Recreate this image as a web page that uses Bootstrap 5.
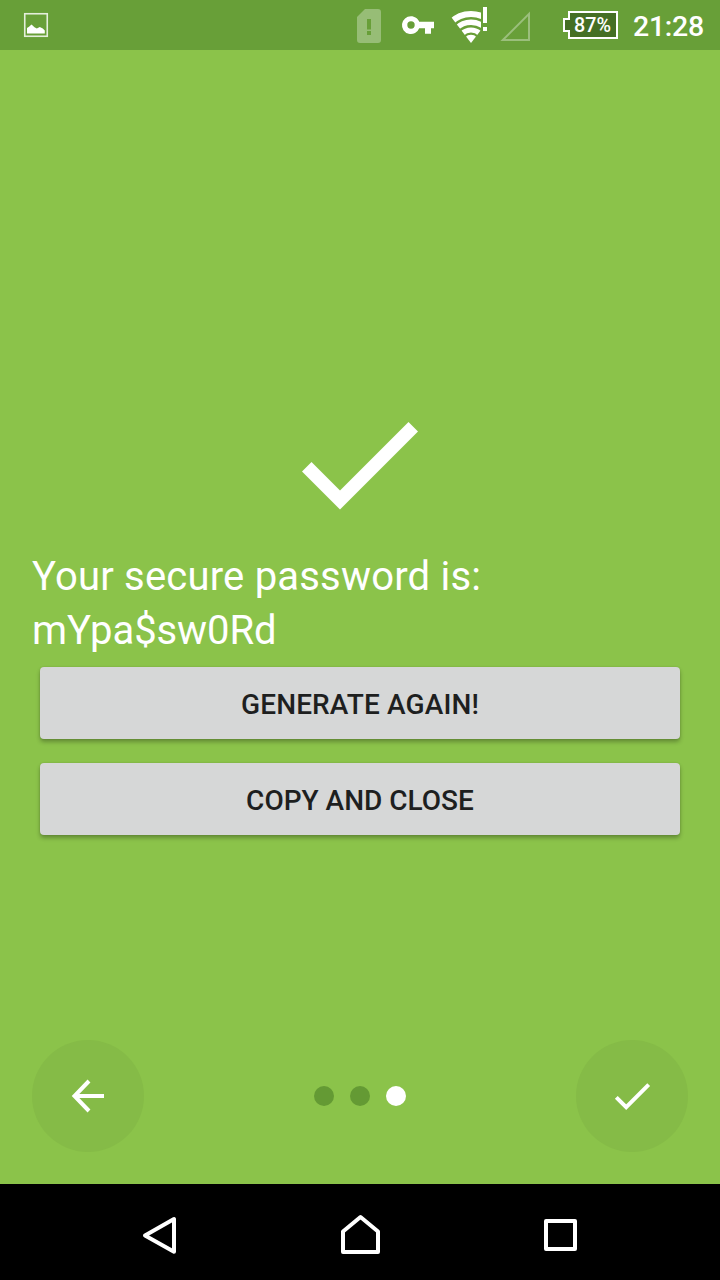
<!DOCTYPE html>
<html lang="en">
<head>
<meta charset="utf-8">
<meta name="viewport" content="width=device-width, initial-scale=1">
<title>Password generator</title>
<link href="https://cdn.jsdelivr.net/npm/bootstrap@5.3.0/dist/css/bootstrap.min.css" rel="stylesheet">
<style>
  body { font-family: Roboto, "Liberation Sans", sans-serif; background: #8bc34a; }
  svg { display: block; flex: none; }
  .screen { width: 720px; height: 1280px; }
  .status-bar { height: 50px; background: #689f38; padding: 0 16px 0 20px; }
  .clock { font-size: 28.500px; font-weight: 500; letter-spacing: -.3px; line-height: 50px; padding-top: 2px; width: 71px; }
  .battery-text { font: 500 20px Roboto, sans-serif; }
  .message { font-size: 40px; line-height: 54px; margin-top: 32px; }
  .message-lead { letter-spacing: .2px; }
  .message-secret { letter-spacing: -.1px; }
  .stage { padding: 364px 32px 0; }
  .actions { padding-top: 9px; }
  .btn-raised {
    height: 72px; border: 0; border-radius: 4px; background: #d6d7d7; color: #1e1f1f;
    font-size: 28px; font-weight: 500; line-height: 72px; padding: 2px 0 0;
    box-shadow: 0 3px 4px rgba(0,0,0,.28), 0 0 2px rgba(0,0,0,.12);
  }
  .btn-wide { letter-spacing: .12px; }
  .round-btn { width: 112px; height: 112px; background: #85bb47; border: 0; padding: 0; }
  .pager { padding: 0 32px 32px; }
  .step { width: 20px; height: 20px; background: #649a34; }
  .step.current { background: #fff; }
  .nav-keys { height: 96px; background: #000; padding: 0 130px; }
</style>
</head>
<body>
<div class="screen d-flex flex-column overflow-hidden text-white">
  <header class="status-bar d-flex align-items-start">
    <svg width="32" height="50" viewBox="20 0 32 50">
      <rect x="24.75" y="13.75" width="22.5" height="22.5" fill="none" stroke="#e4eedb" stroke-width="1.6"/>
      <path d="M27 33.500v-5.500l2-1.200 2.500-2.300 3 2.800 2.300 1.200 3-1.500 3 1.500 2 2v3z" fill="#fff"/>
    </svg>
    <div class="d-flex ms-auto">
      <svg width="48" height="50" viewBox="350 0 48 50">
        <path fill-rule="evenodd" fill="#97bd76" d="M365 9h13a3 3 0 0 1 3 3v28a3 3 0 0 1-3 3h-18a3 3 0 0 1-3-3V17zM367 19v10.500h4V19zM367 31v4h4v-4z"/>
      </svg>
      <svg width="48" height="50" viewBox="398 0 48 50">
        <path fill-rule="evenodd" fill="#fff" d="M411 16.300c3.700 0 6.900 2.300 8.200 5.400H434v6.600h-3v5.500h-6v-5.500h-5.800a8.900 8.900 0 1 1-8.200-12zM411 21.300a3.700 3.700 0 1 0 0 7.400a3.700 3.700 0 1 0 0-7.400z"/>
      </svg>
      <svg width="50" height="50" viewBox="446 0 50 50">
        <defs><clipPath id="fan"><path d="M471 43L443.500 7H481V30z"/></clipPath></defs>
        <g clip-path="url(#fan)" fill="none" stroke="#fff">
          <circle cx="471" cy="43" r="29" stroke-width="6.2"/>
          <circle cx="471" cy="43" r="20.800" stroke-width="5.4"/>
          <circle cx="471" cy="43" r="13" stroke-width="5.2"/>
          <circle cx="471" cy="43" r="8.200" fill="#fff" stroke="none"/>
        </g>
        <path d="M483 7h4v16h-4zM483 27h4v4h-4z" fill="#fff"/>
      </svg>
      <svg width="62" height="50" viewBox="496 0 62 50">
        <path d="M529 13.800V40H502.800z" fill="none" stroke="#9bbf7c" stroke-width="2"/>
      </svg>
      <svg width="75" height="50" viewBox="558 0 75 50">
        <path d="M569 12H617V38H569V31H564V19H569z" fill="#456f24" stroke="#fff" stroke-width="2"/>
        <text class="battery-text" x="574" y="32" textLength="37" lengthAdjust="spacingAndGlyphs" fill="#fff">87%</text>
      </svg>
      <span class="clock text-nowrap">21:28</span>
    </div>
  </header>

  <main class="stage flex-grow-1">
    <svg class="mx-auto" width="128" height="104" viewBox="296 414 128 104">
      <path d="M302 471.500L311.500 462 340 490.500 408.500 422 418 431.500 340 509.500z" fill="#fff"/>
    </svg>
    <p class="message mb-0"><span class="message-lead">Your secure password is:</span><br><span class="message-secret">mYpa$sw0Rd</span></p>
    <div class="actions d-grid gap-4 px-2">
      <button class="btn btn-raised btn-wide" type="button">GENERATE AGAIN!</button>
      <button class="btn btn-raised" type="button">COPY AND CLOSE</button>
    </div>
  </main>

  <footer class="pager d-flex align-items-center justify-content-between">
    <button class="round-btn rounded-circle" type="button" aria-label="Back">
      <svg width="112" height="112" viewBox="32 1040 112 112"><path d="M104 1096H75M89 1081L74.500 1096 89 1111" fill="none" stroke="#fff" stroke-width="4"/></svg>
    </button>
    <div class="d-flex gap-3">
      <span class="step rounded-circle"></span>
      <span class="step rounded-circle"></span>
      <span class="step current rounded-circle"></span>
    </div>
    <button class="round-btn rounded-circle" type="button" aria-label="Done">
      <svg width="112" height="112" viewBox="576 1040 112 112"><path d="M616.300 1097.300L626.200 1107.200 648.700 1084.700" fill="none" stroke="#fff" stroke-width="4"/></svg>
    </button>
  </footer>

  <nav class="nav-keys d-flex justify-content-between" aria-label="System">
    <svg width="60" height="96" viewBox="130 1184 60 96"><path d="M174 1219V1251.700L145 1235.400z" fill="none" stroke="#fff" stroke-width="4" stroke-linejoin="round"/></svg>
    <svg width="60" height="96" viewBox="330 1184 60 96"><path d="M343 1252V1231.500L360.500 1217 378 1231.500V1252z" fill="none" stroke="#fff" stroke-width="4" stroke-linejoin="round"/></svg>
    <svg width="60" height="96" viewBox="530 1184 60 96"><rect x="546" y="1221" width="29" height="28" fill="none" stroke="#fff" stroke-width="4" stroke-linejoin="round"/></svg>
  </nav>
</div>
<script src="https://cdn.jsdelivr.net/npm/bootstrap@5.3.0/dist/js/bootstrap.bundle.min.js"></script>
</body>
</html>
